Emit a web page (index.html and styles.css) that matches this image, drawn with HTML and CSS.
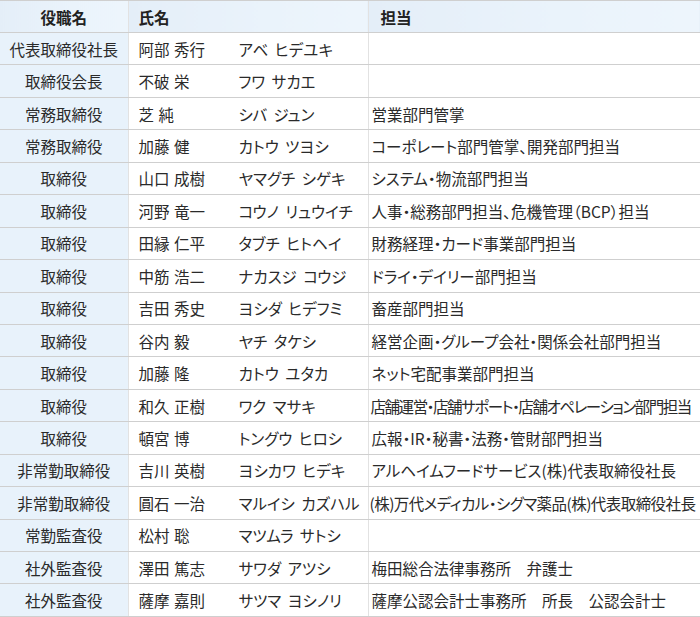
FILE: index.html
```
<!DOCTYPE html>
<html lang="ja">
<head>
<meta charset="utf-8">
<link rel="stylesheet" href="styles.css">
</head>
<body>
<table class="officers">
  <colgroup><col class="c-role"><col class="c-name"><col class="c-duty"></colgroup>
  <thead>
    <tr><th class="role">役職名</th><th class="name">氏名</th><th class="duty">担当</th></tr>
  </thead>
  <tbody>
    <tr><td class="role">代表取締役社長</td><td class="name"><span class="kanji">阿部 秀行</span><span class="kana">アベ ヒデユキ</span></td><td class="duty"></td></tr>
    <tr><td class="role">取締役会長</td><td class="name"><span class="kanji">不破 栄</span><span class="kana">フワ サカエ</span></td><td class="duty"></td></tr>
    <tr><td class="role">常務取締役</td><td class="name"><span class="kanji">芝 純</span><span class="kana">シバ ジュン</span></td><td class="duty">営業部門管掌</td></tr>
    <tr><td class="role">常務取締役</td><td class="name"><span class="kanji">加藤 健</span><span class="kana">カトウ ツヨシ</span></td><td class="duty">コーポレート部門管掌、開発部門担当</td></tr>
    <tr><td class="role">取締役</td><td class="name"><span class="kanji">山口 成樹</span><span class="kana">ヤマグチ シゲキ</span></td><td class="duty">システム・物流部門担当</td></tr>
    <tr><td class="role">取締役</td><td class="name"><span class="kanji">河野 竜一</span><span class="kana">コウノ リュウイチ</span></td><td class="duty">人事・総務部門担当、危機管理（BCP）担当</td></tr>
    <tr><td class="role">取締役</td><td class="name"><span class="kanji">田縁 仁平</span><span class="kana">タブチ ヒトヘイ</span></td><td class="duty">財務経理・カード事業部門担当</td></tr>
    <tr><td class="role">取締役</td><td class="name"><span class="kanji">中筋 浩二</span><span class="kana">ナカスジ コウジ</span></td><td class="duty">ドライ・デイリー部門担当</td></tr>
    <tr><td class="role">取締役</td><td class="name"><span class="kanji">吉田 秀史</span><span class="kana">ヨシダ ヒデフミ</span></td><td class="duty">畜産部門担当</td></tr>
    <tr><td class="role">取締役</td><td class="name"><span class="kanji">谷内 毅</span><span class="kana">ヤチ タケシ</span></td><td class="duty">経営企画・グループ会社・関係会社部門担当</td></tr>
    <tr><td class="role">取締役</td><td class="name"><span class="kanji">加藤 隆</span><span class="kana">カトウ ユタカ</span></td><td class="duty">ネット宅配事業部門担当</td></tr>
    <tr><td class="role">取締役</td><td class="name"><span class="kanji">和久 正樹</span><span class="kana">ワク マサキ</span></td><td class="duty tighter">店舗運営・店舗サポート・店舗オペレーション部門担当</td></tr>
    <tr><td class="role">取締役</td><td class="name"><span class="kanji">頓宮 博</span><span class="kana">トングウ ヒロシ</span></td><td class="duty">広報・IR・秘書・法務・管財部門担当</td></tr>
    <tr><td class="role">非常勤取締役</td><td class="name"><span class="kanji">吉川 英樹</span><span class="kana">ヨシカワ ヒデキ</span></td><td class="duty">アルヘイムフードサービス(株)代表取締役社長</td></tr>
    <tr><td class="role">非常勤取締役</td><td class="name"><span class="kanji">圓石 一治</span><span class="kana">マルイシ カズハル</span></td><td class="duty tight">(株)万代メディカル・シグマ薬品(株)代表取締役社長</td></tr>
    <tr><td class="role">常勤監査役</td><td class="name"><span class="kanji">松村 聡</span><span class="kana">マツムラ サトシ</span></td><td class="duty"></td></tr>
    <tr><td class="role">社外監査役</td><td class="name"><span class="kanji">澤田 篤志</span><span class="kana">サワダ アツシ</span></td><td class="duty">梅田総合法律事務所　弁護士</td></tr>
    <tr><td class="role">社外監査役</td><td class="name"><span class="kanji">薩摩 嘉則</span><span class="kana">サツマ ヨシノリ</span></td><td class="duty">薩摩公認会計士事務所　所長　公認会計士</td></tr>
  </tbody>
</table>
</body>
</html>
```
FILE: styles.css
```
html, body {
  margin: 0;
  padding: 0;
  background: #ffffff;
}
body {
  font-family: "Noto Sans CJK JP", "Noto Sans", sans-serif;
  font-size: 15.5px;
  color: #2a2a2a;
  font-feature-settings: "palt";
}
.officers {
  width: 700px;
  border-collapse: collapse;
  table-layout: fixed;
}
.c-role { width: 128px; }
.c-name { width: 240px; }
.c-duty { width: 332px; }
.officers th,
.officers td {
  border-top: 1px solid #cfcfcf;
  border-bottom: 1px solid #cfcfcf;
  border-left: 1px solid #e2e2e2;
  padding: 0;
  height: 31.45px;
  white-space: nowrap;
  overflow: hidden;
  line-height: 20px;
  vertical-align: middle;
}
.officers th:first-child,
.officers td:first-child { border-left: none; }
.officers thead th {
  background: linear-gradient(to right, #e4eef8, #eaf3fb 60%, #edf5fc);
  font-weight: bold;
  color: #222;
  height: 31px;
  text-align: left;
}
.officers th.role { text-align: center; }
.officers th.name { padding-left: 10px; }
.officers th.duty { padding-left: 12px; }
.officers td.role {
  background: #e8f2fb;
  text-align: center;
}
.officers td.name { padding-left: 10px; }
.kanji {
  display: inline-block;
  width: 100px;
  word-spacing: 1px;
}
.kana {
  display: inline-block;
  word-spacing: 3px;
}
.officers td.duty { padding-left: 3px; }
.officers td.duty.tighter {
  letter-spacing: -1.45px;
  padding-left: 2px;
}
.officers td.duty.tight {
  letter-spacing: -0.55px;
  padding-left: 1px;
}
```
